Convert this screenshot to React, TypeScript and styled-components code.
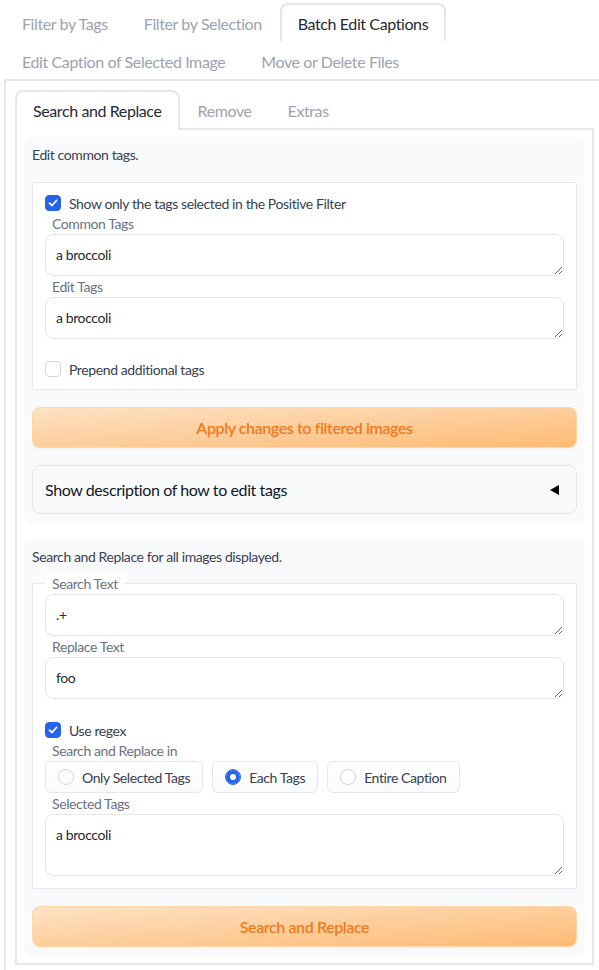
import styled, { createGlobalStyle } from 'styled-components'

const GlobalStyle = createGlobalStyle`
  html {
    overflow-x: hidden;
  }

  body {
    background: #fff;
    color: #1f2937;
    font-family: Lato, 'Liberation Sans', sans-serif;
    letter-spacing: -0.025em;
    margin: 0;
  }

  * {
    box-sizing: border-box;
  }
`

const Page = styled.div`
  margin-right: -6px;
  padding-top: 3px;
`

const TabNav = styled.nav<{ $indent?: boolean }>`
  border-bottom: 2px solid #e5e7eb;
  display: flex;
  flex-wrap: wrap;
  margin-left: ${(p) => (p.$indent ? '4px' : '0')};
`

const Tab = styled.button<{ $active?: boolean; $flush?: boolean }>`
  background: ${(p) => (p.$active ? '#fff' : 'transparent')};
  border: 2px solid ${(p) => (p.$active ? '#e5e7eb' : 'transparent')};
  border-bottom: 0;
  border-radius: 8px 8px 0 0;
  color: ${(p) => (p.$active ? '#1f2937' : '#9ca3af')};
  font-family: inherit;
  font-size: 16px;
  height: ${(p) => (p.$flush ? '40px' : '38px')};
  letter-spacing: inherit;
  margin-bottom: ${(p) => (p.$flush ? '-2px' : '0')};
  padding: 0 16px ${(p) => (p.$flush ? '2px' : '0')};
  white-space: nowrap;
`

const OuterPanel = styled.section`
  border-left: 2px solid #e5e7eb;
  border-right: 2px solid #e5e7eb;
  margin-left: 4px;
  padding: 9px;
`

const InnerPanel = styled.div`
  border: 2px solid #e5e7eb;
  border-top: 0;
  display: flex;
  flex-direction: column;
  gap: 16px;
  padding: 7px;
`

const Group = styled.div`
  background: #f9fafb;
  border-radius: 8px;
  display: flex;
  flex-direction: column;
  gap: 17px;
  padding: 8px 8px 9px;
`

const Hint = styled.p<{ $tall?: boolean }>`
  color: #374151;
  font-size: 14px;
  line-height: ${(p) => (p.$tall ? '20px' : '19px')};
  margin: 0;
`

const FormBox = styled.div`
  background: #fff;
  border: 1px solid #e5e7eb;
  border-radius: 2px;
  display: flex;
  flex-direction: column;
  padding: 12px;
`

const CheckRow = styled.label<{ $spaced?: number }>`
  align-items: center;
  color: #374151;
  display: flex;
  font-size: 14px;
  gap: 8px;
  height: 16px;
  margin: ${(p) => p.$spaced ?? 0}px 0 2px;

  &:last-child {
    margin-bottom: 0;
  }
`

const CheckBox = styled.span<{ $checked?: boolean }>`
  align-items: center;
  background: ${(p) => (p.$checked ? '#2563eb' : '#fff')};
  border: 1px solid ${(p) => (p.$checked ? '#2563eb' : '#d1d5db')};
  border-radius: 4px;
  display: flex;
  flex-shrink: 0;
  height: 16px;
  justify-content: center;
  width: 16px;
`

const FieldLabel = styled.span<{ $legend?: boolean }>`
  align-self: flex-start;
  background: #fff;
  color: #6b7280;
  display: block;
  font-size: 14px;
  line-height: 21px;
  margin-top: ${(p) => (p.$legend ? '-23px' : '0')};
  padding: 0 7px;
`

const TextArea = styled.textarea<{ $rows: number }>`
  background: #fff;
  border: 1px solid #e5e7eb;
  border-radius: 8px;
  color: #1f2937;
  display: block;
  font-family: inherit;
  font-size: 14px;
  height: ${(p) => p.$rows * 20 + 22}px;
  letter-spacing: inherit;
  line-height: 20px;
  outline: none;
  overflow: hidden;
  padding: 10px;
  resize: vertical;
  width: 100%;
`

const RadioRow = styled.div`
  display: flex;
  flex-wrap: wrap;
  gap: 9px;
`

const RadioOption = styled.label`
  align-items: center;
  background: linear-gradient(to bottom, #fff, #f9fafb);
  border: 1px solid #e5e7eb;
  border-radius: 6px;
  color: #374151;
  display: flex;
  font-size: 14px;
  gap: 8px;
  height: 32px;
  padding: 0 12px;
`

const RadioDot = styled.span<{ $checked?: boolean }>`
  background: #fff;
  border: 1px solid ${(p) => (p.$checked ? '#2563eb' : '#d1d5db')};
  border-radius: 50%;
  box-shadow: ${(p) => (p.$checked ? 'inset 0 0 0 4px #2563eb' : 'none')};
  flex-shrink: 0;
  height: 16px;
  width: 16px;
`

const PrimaryButton = styled.button`
  background: linear-gradient(to bottom right, #fee2c4, #fdba74);
  border: 1px solid #fed7aa;
  border-radius: 8px;
  box-shadow: 0 1px 2px rgba(0, 0, 0, 0.05);
  color: #f27a1a;
  font-family: inherit;
  font-size: 16px;
  font-weight: 600;
  height: 41px;
  letter-spacing: inherit;
  width: 100%;
`

const Accordion = styled.div`
  align-items: center;
  background: #f9fafb;
  border: 1px solid #e5e7eb;
  border-radius: 8px;
  color: #111827;
  display: flex;
  font-size: 16px;
  justify-content: space-between;
  line-height: 23px;
  padding: 12px 17px 12px 12px;
`

const Check = () => (
  <svg width="10" height="8" viewBox="0 0 10 8">
    <path d="M1.5 4.2 L4 6.5 L8.5 1.5" fill="none" stroke="#fff" strokeWidth="1.8" strokeLinecap="round" strokeLinejoin="round" />
  </svg>
)

const Caret = () => (
  <svg width="9" height="10" viewBox="0 0 9 10">
    <polygon points="9,0 9,10 0,5" fill="#000" />
  </svg>
)

type CheckProps = { label: string; checked?: boolean; spaced?: number }

const CheckField = ({ label, checked, spaced }: CheckProps) => (
  <CheckRow $spaced={spaced}>
    <CheckBox $checked={checked}>{checked && <Check />}</CheckBox>
    {label}
  </CheckRow>
)

const scopes = ['Only Selected Tags', 'Each Tags', 'Entire Caption']

export default function App() {
  return (
    <Page>
      <GlobalStyle />
      <TabNav $indent>
        <Tab>Filter by Tags</Tab>
        <Tab>Filter by Selection</Tab>
        <Tab $active>Batch Edit Captions</Tab>
        <Tab>Edit Caption of Selected Image</Tab>
        <Tab>Move or Delete Files</Tab>
      </TabNav>
      <OuterPanel>
        <TabNav>
          <Tab $active $flush>
            Search and Replace
          </Tab>
          <Tab>Remove</Tab>
          <Tab>Extras</Tab>
        </TabNav>
        <InnerPanel>
          <Group>
            <Hint $tall>Edit common tags.</Hint>
            <FormBox>
              <CheckField label="Show only the tags selected in the Positive Filter" checked />
              <FieldLabel>Common Tags</FieldLabel>
              <TextArea $rows={1} defaultValue="a broccoli" />
              <FieldLabel>Edit Tags</FieldLabel>
              <TextArea $rows={1} defaultValue="a broccoli" />
              <CheckField label="Prepend additional tags" spaced={22} />
            </FormBox>
            <PrimaryButton type="button">Apply changes to filtered images</PrimaryButton>
            <Accordion>
              <span>Show description of how to edit tags</span>
              <Caret />
            </Accordion>
          </Group>

          <Group>
            <Hint>Search and Replace for all images displayed.</Hint>
            <FormBox>
              <FieldLabel $legend>Search Text</FieldLabel>
              <TextArea $rows={1} defaultValue=".+" />
              <FieldLabel>Replace Text</FieldLabel>
              <TextArea $rows={1} defaultValue="foo" />
              <CheckField label="Use regex" checked spaced={23} />
              <FieldLabel>Search and Replace in</FieldLabel>
              <RadioRow>
                {scopes.map((scope) => (
                  <RadioOption key={scope}>
                    <RadioDot $checked={scope === 'Each Tags'} />
                    {scope}
                  </RadioOption>
                ))}
              </RadioRow>
              <FieldLabel>Selected Tags</FieldLabel>
              <TextArea $rows={2} defaultValue="a broccoli" />
            </FormBox>
            <PrimaryButton type="button">Search and Replace</PrimaryButton>
          </Group>
        </InnerPanel>
      </OuterPanel>
    </Page>
  )
}
